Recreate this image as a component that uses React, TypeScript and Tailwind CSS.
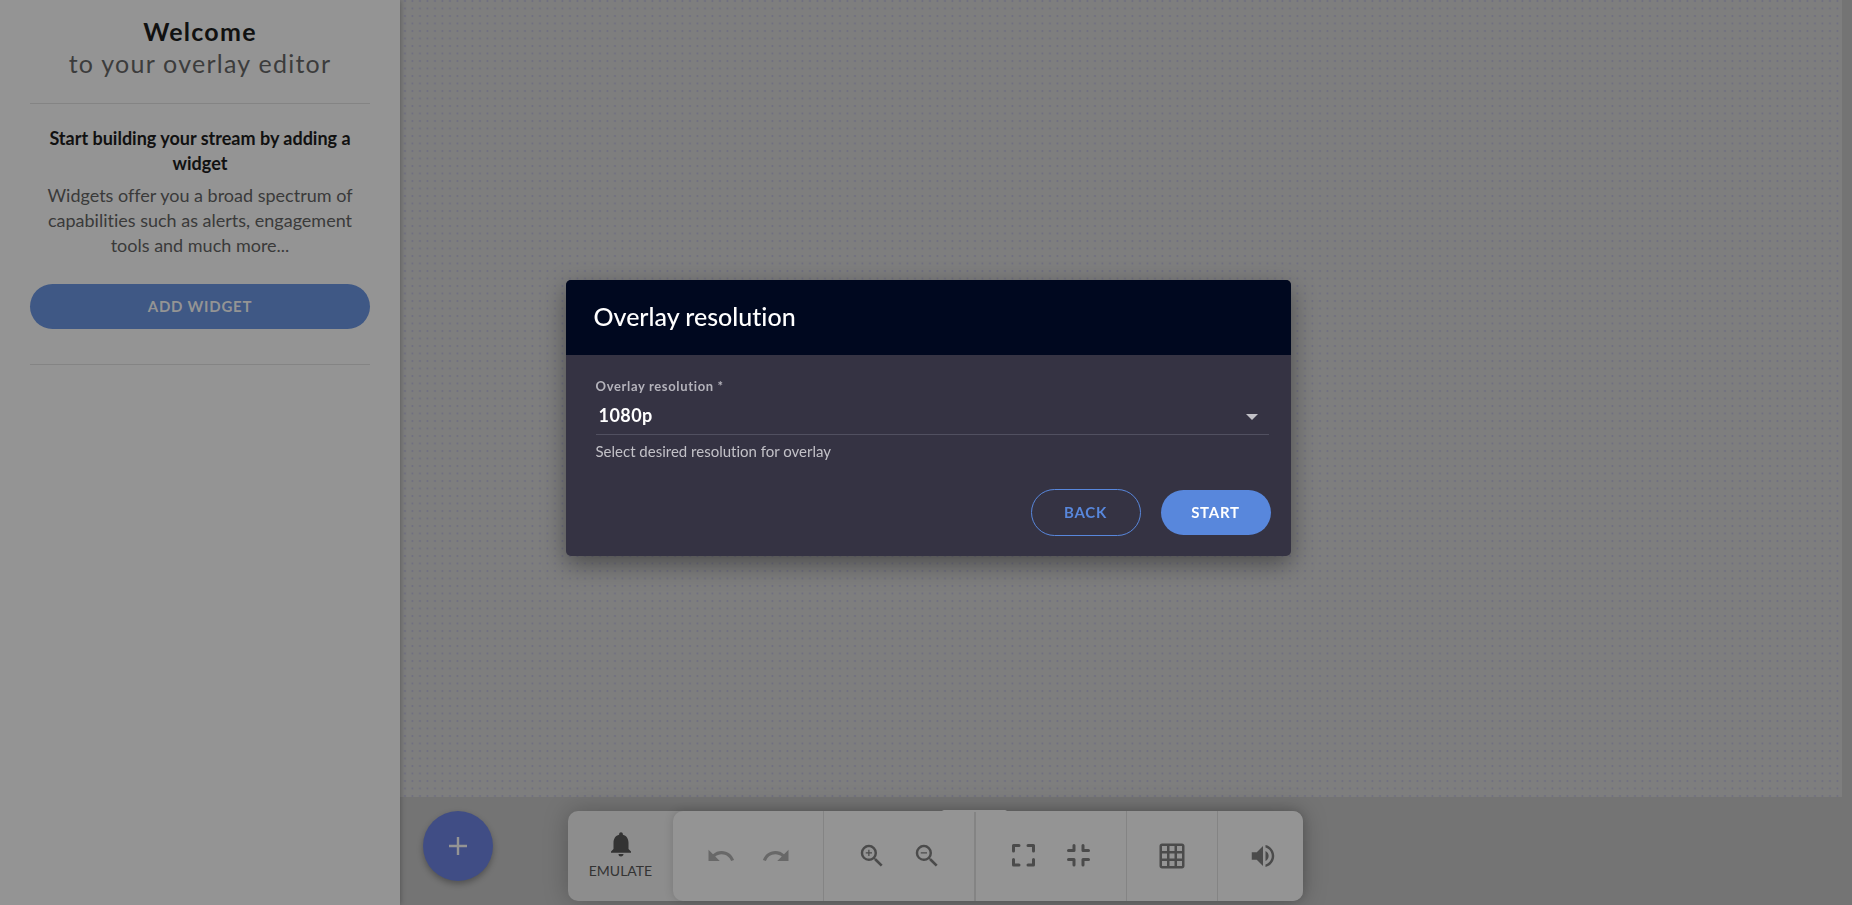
import { useState, type ReactNode } from "react";
import { MdGridOn, MdNotifications, MdRedo, MdUndo, MdVolumeUp, MdZoomIn, MdZoomOut } from "react-icons/md";

function FitIcon({ d }: { d: string }) {
  return (
    <svg
      viewBox="0 0 30 30"
      className="size-[30px]"
      fill="none"
      stroke="currentColor"
      strokeWidth="3"
      strokeLinecap="round"
      strokeLinejoin="round"
      aria-hidden="true"
    >
      <path d={d} />
    </svg>
  );
}

function ToolButton({ label, muted, children }: { label: string; muted?: boolean; children: ReactNode }) {
  return (
    <button
      type="button"
      aria-label={label}
      className={`flex size-[30px] items-center justify-center ${muted ? "text-[#686868]" : "text-[#4b4b4b]"}`}
    >
      {children}
    </button>
  );
}

function Sidebar() {
  return (
    <aside className="relative z-10 w-[400px] shrink-0 bg-[#949494] px-[30px] text-center shadow-[0_0_6px_rgba(0,0,0,0.35)]">
      <header className="border-b border-[#848484] pt-[15px] pb-6 text-[25px] tracking-wider">
        <h1 className="leading-8 font-bold text-[#111111]">Welcome</h1>
        <p className="leading-8 text-[#3c3c3c]">to your overlay editor</p>
      </header>
      <section className="border-b border-[#848484] pt-[22px] pb-[35px]">
        <h2 className="px-4 text-[18px] leading-[25px] font-bold text-[#111111]">
          Start building your stream by adding a widget
        </h2>
        <p className="mt-[7px] px-4 text-[18px] leading-[25px] text-[#3a3a3a]">
          Widgets offer you a broad spectrum of capabilities such as alerts, engagement tools and much more...
        </p>
        <button
          type="button"
          className="mt-[26px] h-[45px] w-full rounded-full bg-[#3f5885] text-[15px] font-bold tracking-wider text-[#949494]"
        >
          ADD WIDGET
        </button>
      </section>
    </aside>
  );
}

function Canvas() {
  return (
    <div className="mr-[10px] flex-1 bg-[#7e7e7e]">
      <svg className="size-full" aria-hidden="true">
        <defs>
          <pattern id="dots" width="7.5" height="7.5" patternUnits="userSpaceOnUse">
            <circle cx="5" cy="1" r="1" fill="#6d6d80" />
          </pattern>
        </defs>
        <rect width="100%" height="100%" fill="url(#dots)" />
      </svg>
    </div>
  );
}

function Toolbar() {
  return (
    <footer className="flex h-[108px] gap-[75px] bg-[#747474] pt-[14px] pl-[23px]">
      <button
        type="button"
        aria-label="Add"
        className="flex size-[70px] items-center justify-center rounded-full bg-[#404d85] text-[#949494] shadow-[0_3px_6px_rgba(0,0,0,0.3)]"
      >
        <svg viewBox="0 0 18 18" className="size-[18px]" stroke="currentColor" strokeWidth="2.4" aria-hidden="true">
          <path d="M9 0v18M0 9h18" />
        </svg>
      </button>
      <div className="relative flex h-[90px] rounded-[10px] bg-[#8d8d8d] shadow-[0_0_24px_rgba(0,0,0,0.25)]">
        <span className="absolute -top-px left-[374px] h-[2px] w-[65px] rounded-t bg-[#949494]" />
        <button type="button" className="flex w-[105px] flex-col items-center pt-[18px] text-[14px] leading-5 text-[#333333]">
          <MdNotifications className="size-[30px]" />
          <span className="mt-[2px]">EMULATE</span>
        </button>
        <div className="flex rounded-[10px] bg-[#949494] shadow-[0_0_10px_rgba(0,0,0,0.15)]">
          <div className="flex w-[151px] items-center justify-center gap-[25px] border-r border-[#848484]">
            <ToolButton label="Undo" muted><MdUndo className="size-[30px]" /></ToolButton>
            <ToolButton label="Redo" muted><MdRedo className="size-[30px]" /></ToolButton>
          </div>
          <div className="flex w-[152px] items-center justify-center gap-[25px] border-r-2 border-[#848484]">
            <ToolButton label="Zoom in"><MdZoomIn className="size-[30px]" /></ToolButton>
            <ToolButton label="Zoom out"><MdZoomOut className="size-[30px]" /></ToolButton>
          </div>
          <div className="flex w-[151px] items-center justify-center gap-[25px] border-r border-[#848484]">
            <ToolButton label="Full screen"><FitIcon d="M4.500 10V4.500H10M19 4.500H24.500V10M24.500 18.500V24H19M10 24H4.500V18.500" /></ToolButton>
            <ToolButton label="Exit full screen"><FitIcon d="M4.500 9.500H10V4.500M19 4.500V9.500H24.500M24.500 18.500H19V24M10 24V18.500H4.500" /></ToolButton>
          </div>
          <div className="flex w-[91px] items-center justify-center border-r border-[#848484]">
            <ToolButton label="Grid"><MdGridOn className="size-[30px]" /></ToolButton>
          </div>
          <div className="flex w-[85px] items-center justify-center pl-1">
            <ToolButton label="Volume"><MdVolumeUp className="size-[30px]" /></ToolButton>
          </div>
        </div>
      </div>
    </footer>
  );
}

function ResolutionDialog() {
  const [resolution, setResolution] = useState("1080p");
  return (
    <div className="fixed inset-0 z-20 flex items-start justify-center pt-[280px] pl-1">
      <div
        role="dialog"
        aria-labelledby="dialog-title"
        className="w-[725px] overflow-hidden rounded-[5px] bg-[#353343] shadow-[0_8px_24px_rgba(0,0,0,0.4)]"
      >
        <h2 id="dialog-title" className="bg-[#00081f] px-7 pt-[19px] pb-[21px] text-[25px] leading-[35px] font-medium text-white">
          Overlay resolution
        </h2>
        <form className="p-5" onSubmit={(e) => e.preventDefault()}>
          <div className="pr-[2px] pl-[10px]">
            <label htmlFor="resolution" className="block text-[13px] leading-[22px] font-bold tracking-wider text-[#b4b3bb]">
              Overlay resolution *
            </label>
            <div className="relative flex border-b border-[#515060]">
              <select
                id="resolution"
                value={resolution}
                onChange={(e) => setResolution(e.target.value)}
                className="h-[37px] flex-1 appearance-none px-[3px] text-[18px] font-bold tracking-wide text-white"
              >
                <option>1080p</option>
                <option>720p</option>
              </select>
              <svg viewBox="0 0 12 6" className="pointer-events-none absolute top-[17px] right-[11px] h-[6px] w-3 fill-[#c2c1c7]" aria-hidden="true">
                <path d="M0 0h12L6 6z" />
              </svg>
            </div>
            <p className="mt-[6px] text-[15px] leading-5 text-[#c2c1c7]">Select desired resolution for overlay</p>
          </div>
          <div className="mt-7 flex items-center justify-end gap-5">
            <button type="button" className="h-[47px] w-[110px] rounded-full border border-[#5887dc] text-[15px] font-bold tracking-wider text-[#5887dc]">
              BACK
            </button>
            <button type="submit" className="h-[45px] w-[110px] rounded-full bg-[#5887dc] text-[15px] font-bold tracking-wider text-white">
              START
            </button>
          </div>
        </form>
      </div>
    </div>
  );
}

export default function App() {
  return (
    <div className="flex h-screen overflow-hidden bg-[#747474] font-['Lato',sans-serif] [font-variant-ligatures:none]">
      <Sidebar />
      <main className="flex min-w-0 flex-1 flex-col">
        <Canvas />
        <Toolbar />
      </main>
      <ResolutionDialog />
    </div>
  );
}
